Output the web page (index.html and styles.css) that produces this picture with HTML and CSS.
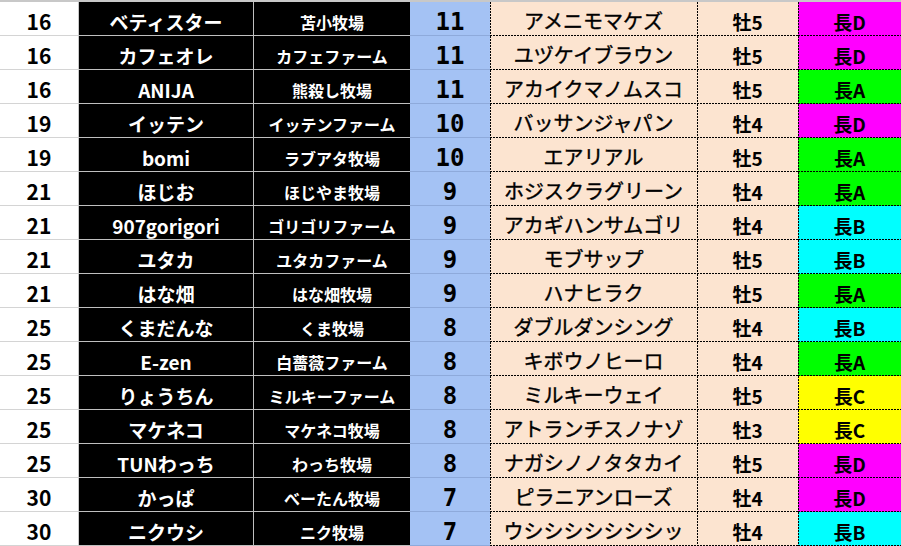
FILE: index.html
```html
<!DOCTYPE html>
<html lang="ja">
<head>
<meta charset="utf-8">
<title>順位表</title>
<link rel="stylesheet" href="styles.css">
</head>
<body>
<div class="sheet">
  <div class="row"><div class="cell rank">16</div><div class="cell name">ベティスター</div><div class="cell farm">苫小牧場</div><div class="cell pts">11</div><div class="cell horse">アメニモマケズ</div><div class="cell sex">牡5</div><div class="cell dist dist-d">長D</div></div>
  <div class="row"><div class="cell rank">16</div><div class="cell name">カフェオレ</div><div class="cell farm">カフェファーム</div><div class="cell pts">11</div><div class="cell horse">ユヅケイブラウン</div><div class="cell sex">牡5</div><div class="cell dist dist-d">長D</div></div>
  <div class="row"><div class="cell rank">16</div><div class="cell name">ANIJA</div><div class="cell farm">熊殺し牧場</div><div class="cell pts">11</div><div class="cell horse">アカイクマノムスコ</div><div class="cell sex">牡5</div><div class="cell dist dist-a">長A</div></div>
  <div class="row"><div class="cell rank">19</div><div class="cell name">イッテン</div><div class="cell farm">イッテンファーム</div><div class="cell pts">10</div><div class="cell horse">バッサンジャパン</div><div class="cell sex">牡4</div><div class="cell dist dist-d">長D</div></div>
  <div class="row"><div class="cell rank">19</div><div class="cell name">bomi</div><div class="cell farm">ラブアタ牧場</div><div class="cell pts">10</div><div class="cell horse">エアリアル</div><div class="cell sex">牡5</div><div class="cell dist dist-a">長A</div></div>
  <div class="row"><div class="cell rank">21</div><div class="cell name">ほじお</div><div class="cell farm">ほじやま牧場</div><div class="cell pts">9</div><div class="cell horse">ホジスクラグリーン</div><div class="cell sex">牡4</div><div class="cell dist dist-a">長A</div></div>
  <div class="row"><div class="cell rank">21</div><div class="cell name">907gorigori</div><div class="cell farm">ゴリゴリファーム</div><div class="cell pts">9</div><div class="cell horse">アカギハンサムゴリ</div><div class="cell sex">牡4</div><div class="cell dist dist-b">長B</div></div>
  <div class="row"><div class="cell rank">21</div><div class="cell name">ユタカ</div><div class="cell farm">ユタカファーム</div><div class="cell pts">9</div><div class="cell horse">モブサップ</div><div class="cell sex">牡5</div><div class="cell dist dist-b">長B</div></div>
  <div class="row"><div class="cell rank">21</div><div class="cell name">はな畑</div><div class="cell farm">はな畑牧場</div><div class="cell pts">9</div><div class="cell horse">ハナヒラク</div><div class="cell sex">牡5</div><div class="cell dist dist-a">長A</div></div>
  <div class="row"><div class="cell rank">25</div><div class="cell name">くまだんな</div><div class="cell farm">くま牧場</div><div class="cell pts">8</div><div class="cell horse">ダブルダンシング</div><div class="cell sex">牡4</div><div class="cell dist dist-b">長B</div></div>
  <div class="row"><div class="cell rank">25</div><div class="cell name">E-zen</div><div class="cell farm">白薔薇ファーム</div><div class="cell pts">8</div><div class="cell horse">キボウノヒーロ</div><div class="cell sex">牡4</div><div class="cell dist dist-a">長A</div></div>
  <div class="row"><div class="cell rank">25</div><div class="cell name">りょうちん</div><div class="cell farm">ミルキーファーム</div><div class="cell pts">8</div><div class="cell horse">ミルキーウェイ</div><div class="cell sex">牡5</div><div class="cell dist dist-c">長C</div></div>
  <div class="row"><div class="cell rank">25</div><div class="cell name">マケネコ</div><div class="cell farm">マケネコ牧場</div><div class="cell pts">8</div><div class="cell horse">アトランチスノナゾ</div><div class="cell sex">牡3</div><div class="cell dist dist-c">長C</div></div>
  <div class="row"><div class="cell rank">25</div><div class="cell name">TUNわっち</div><div class="cell farm">わっち牧場</div><div class="cell pts">8</div><div class="cell horse">ナガシノノタタカイ</div><div class="cell sex">牡5</div><div class="cell dist dist-d">長D</div></div>
  <div class="row"><div class="cell rank">30</div><div class="cell name">かっぱ</div><div class="cell farm">べーたん牧場</div><div class="cell pts">7</div><div class="cell horse">ピラニアンローズ</div><div class="cell sex">牡4</div><div class="cell dist dist-d">長D</div></div>
  <div class="row"><div class="cell rank">30</div><div class="cell name">ニクウシ</div><div class="cell farm">ニク牧場</div><div class="cell pts">7</div><div class="cell horse">ウシシシシシシシッ</div><div class="cell sex">牡4</div><div class="cell dist dist-b">長B</div></div>
</div>
</body>
</html>
```

FILE: styles.css
```css
html, body {
  margin: 0;
  padding: 0;
  background: #ffffff;
}

.sheet {
  width: 901px;
  border-top: 2px solid #c8c8c8;
  font-family: "Noto Sans CJK JP", "Noto Sans", sans-serif;
  font-weight: 700;
}

.row {
  display: grid;
  grid-template-columns: 79px 175px 156px 80px 207px 101px 103px;
  height: 34px;
}

.cell {
  box-sizing: border-box;
  display: flex;
  justify-content: center;
  align-items: flex-end;
  line-height: 1;
  white-space: nowrap;
  overflow: hidden;
}

.rank {
  background: #ffffff;
  color: #000000;
  font-size: 21px;
  padding-bottom: 3px;
  border-right: 1px solid #c8c8c8;
  border-bottom: 1px solid #d4d4d4;
}

.name {
  background: #000000;
  color: #ffffff;
  font-size: 19px;
  padding-bottom: 4px;
  border-right: 1px solid #bfbfbf;
  border-bottom: 1px solid #bfbfbf;
}

.farm {
  background: #000000;
  color: #ffffff;
  font-size: 16px;
  padding-bottom: 5px;
  border-bottom: 1px solid #bfbfbf;
}

.pts {
  background: #a4c2f4;
  color: #000000;
  font-family: "DejaVu Sans Mono", monospace;
  font-size: 24px;
  align-items: flex-start;
  padding-top: 8px;
  border-bottom: 1px solid #8eaadb;
}

.horse,
.sex,
.dist {
  color: #000000;
  background-image:
    repeating-linear-gradient(90deg, #000 0 2px, transparent 2px 3px),
    repeating-linear-gradient(180deg, #000 0 2px, transparent 2px 3px);
  background-size: 100% 1px, 1px 100%;
  background-position: left bottom, left top;
  background-repeat: no-repeat;
}

.horse {
  background-color: #fce4d0;
  font-size: 20px;
  font-weight: 400;
  -webkit-text-stroke: 0.4px #000000;
  padding-bottom: 5px;
}

.sex {
  background-color: #fce4d0;
  font-size: 19px;
  padding-bottom: 5px;
}

.dist {
  font-size: 19px;
  padding-bottom: 5px;
}

.dist-a { background-color: #00ff00; }
.dist-b { background-color: #00ffff; }
.dist-c { background-color: #ffff00; }
.dist-d { background-color: #ff00ff; }
```
